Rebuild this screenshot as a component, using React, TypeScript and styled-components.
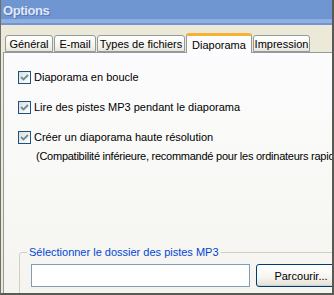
import React from 'react';
import styled, { createGlobalStyle } from 'styled-components';

const GlobalStyle = createGlobalStyle`
  html, body {
    margin: 0;
    padding: 0;
    background: #ece9d8;
  }
  body {
    font-family: "Liberation Sans", Arial, sans-serif;
    font-size: 11px;
    color: #000;
  }
`;

const Window = styled.div`
  width: 334px;
  height: 295px;
  box-sizing: border-box;
  display: flex;
  flex-direction: column;
  overflow: hidden;
  background: #ece9d8;
  border-left: 1px solid #6f6f68;
  border-right: 2px solid #5a5a55;
  border-bottom: 2px solid #5a5a55;
`;

const TitleBar = styled.div`
  flex: none;
  height: 25px;
  box-sizing: border-box;
  padding: 0 0 5px 2px;
  display: flex;
  align-items: center;
  background: linear-gradient(
    to bottom,
    #7096d2 0px,
    #6e94d1 19px,
    #8daee2 19px,
    #92b1e2 23px,
    #7096d2 23px
  );
`;

const Title = styled.h1`
  margin: 0;
  font-family: "Liberation Sans", Arial, sans-serif;
  font-size: 13px;
  font-weight: bold;
  letter-spacing: -0.4px;
  color: #dfe8f8;
  text-shadow: 1px 1px 0 #5577b4;
`;

const Body = styled.div`
  flex: 1;
  display: flex;
  flex-direction: column;
  padding: 8px 0 0 2px;
  min-height: 0;
`;

const TabRow = styled.div`
  display: flex;
  align-items: flex-end;
  height: 20px;
  padding-left: 2px;
  position: relative;
  z-index: 1;
`;

const Tab = styled.div<{ $w: number; $active?: boolean }>`
  flex: none;
  width: ${(p) => p.$w}px;
  height: ${(p) => (p.$active ? 20 : 17)}px;
  margin-right: 1px;
  margin-bottom: ${(p) => (p.$active ? -1 : 0)}px;
  box-sizing: border-box;
  display: flex;
  align-items: center;
  justify-content: center;
  padding-top: ${(p) => (p.$active ? 0 : 1)}px;
  white-space: nowrap;
  border: 1px solid #919b9c;
  border-bottom: ${(p) => (p.$active ? 'none' : '1px solid #919b9c')};
  border-top: ${(p) => (p.$active ? '3px solid #f6b235' : '1px solid #919b9c')};
  border-radius: 3px 3px 0 0;
  background: ${(p) =>
    p.$active ? '#fcfcfe' : 'linear-gradient(to bottom, #ffffff, #f3f2ec 70%, #e6e4d8)'};
`;

const Panel = styled.div`
  flex: 1;
  width: 420px;
  box-sizing: border-box;
  border: 1px solid #919b9c;
  padding: 18px 0 0 14px;
  display: flex;
  flex-direction: column;
  background: linear-gradient(to bottom, #fcfcfe 0%, #f8f8f5 50%, #f4f3ee 100%);
`;

const OptionList = styled.div`
  display: flex;
  flex-direction: column;
  gap: 17px;
`;

const Option = styled.label`
  display: grid;
  grid-template-columns: 13px auto;
  column-gap: 3px;
  align-items: center;
  line-height: 13px;
  white-space: nowrap;
`;

const Note = styled.span`
  grid-column: 2;
  margin: 6px 0 0 2px;
  letter-spacing: -0.25px;
`;

const Box = styled.span`
  width: 13px;
  height: 13px;
  box-sizing: border-box;
  border: 1px solid #1c5180;
  background: linear-gradient(135deg, #dcdcd7, #f6f6f4 70%, #ffffff);
  display: flex;
  align-items: center;
  justify-content: center;
`;

const Group = styled.fieldset`
  margin: 82px 0 0 1px;
  padding: 5px 11px 30px 11px;
  border: 1px solid #d0d0bf;
  border-radius: 3px;
  display: flex;
  gap: 6px;
  align-items: center;
`;

const Legend = styled.legend`
  margin-left: -4px;
  padding: 0 2px;
  line-height: 14px;
  color: #0046d5;
`;

const PathInput = styled.div`
  width: 219px;
  height: 23px;
  box-sizing: border-box;
  border: 1px solid #7f9db9;
  background: #fff;
`;

const Button = styled.div`
  width: 90px;
  height: 23px;
  box-sizing: border-box;
  border: 1px solid #003c74;
  border-radius: 3px;
  display: flex;
  align-items: center;
  justify-content: center;
  background: linear-gradient(to bottom, #ffffff 0%, #f6f5f0 60%, #e3e0d6 100%);
  box-shadow: inset 0 -1px 0 #d6d0c5;
`;

const Check = () => (
  <svg width="9" height="9" viewBox="0 0 9 9">
    <path d="M1 4 L3.5 6.5 L8 2" fill="none" stroke="#6f8c9e" strokeWidth="1.8" />
  </svg>
);

const tabs = [
  { label: 'Général', w: 48 },
  { label: 'E-mail', w: 42 },
  { label: 'Types de fichiers', w: 88 },
  { label: 'Diaporama', w: 66, active: true },
  { label: 'Impression', w: 57 },
];

export default function App() {
  return (
    <>
      <GlobalStyle />
      <Window>
        <TitleBar>
          <Title>Options</Title>
        </TitleBar>
        <Body>
          <TabRow>
            {tabs.map((t) => (
              <Tab key={t.label} $w={t.w} $active={t.active}>
                {t.label}
              </Tab>
            ))}
          </TabRow>
          <Panel>
            <OptionList>
              <Option>
                <Box><Check /></Box>
                <span>Diaporama en boucle</span>
              </Option>
              <Option>
                <Box><Check /></Box>
                <span>Lire des pistes MP3 pendant le diaporama</span>
              </Option>
              <Option>
                <Box><Check /></Box>
                <span>Créer un diaporama haute résolution</span>
                <Note>(Compatibilité inférieure, recommandé pour les ordinateurs rapides)</Note>
              </Option>
            </OptionList>
            <Group>
              <Legend>Sélectionner le dossier des pistes MP3</Legend>
              <PathInput />
              <Button>Parcourir...</Button>
            </Group>
          </Panel>
        </Body>
      </Window>
    </>
  );
}
